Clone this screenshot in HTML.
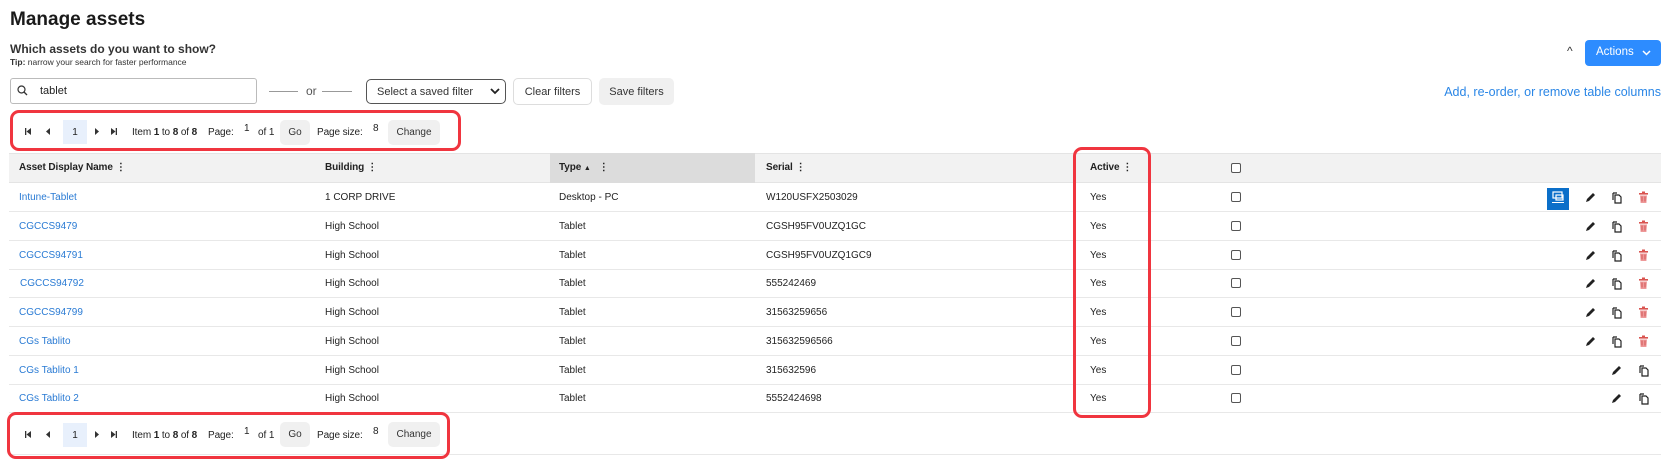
<!DOCTYPE html>
<html><head><meta charset="utf-8"><style>
*{box-sizing:border-box;margin:0;padding:0}
body{width:1670px;height:469px;background:#fff;font-family:"Liberation Sans",Arial,sans-serif;color:#222;position:relative;overflow:hidden}
.a{position:absolute;white-space:nowrap}
.t{font-size:10px;letter-spacing:-0.1px}
.lnk{color:#2a7bd4}
.btn{position:absolute;background:#f0f0f0;border-radius:5px;font-size:10px;color:#333;display:flex;align-items:center;justify-content:center}
.row{position:absolute;left:9px;width:1652px;height:29px;border-bottom:1px solid #e8e8e8}
.row span{position:absolute;top:9px;font-size:10px}
.cb{position:absolute;width:10px;height:10px;border:1px solid #555;border-radius:2px;background:#fff}
.red{position:absolute;border:3px solid #f0353f;border-radius:9px}
.dots{display:inline-block;font-weight:bold;margin-left:3px}
</style></head><body>
<div class="a" style="left:10px;top:9px;font-size:19px;font-weight:bold;color:#1a1a1a">Manage assets</div>
<div class="a" style="left:10px;top:42px;font-size:12px;font-weight:bold;color:#333">Which assets do you want to show?</div>
<div class="a" style="left:10px;top:57px;font-size:8.5px;color:#333"><b>Tip:</b> narrow your search for faster performance</div>

<div class="a" style="left:10px;top:78px;width:247px;height:26px;border:1px solid #bbb;border-radius:3px"></div>
<svg class="a" style="left:17px;top:85px" width="11" height="11" viewBox="0 0 11 11"><circle cx="4.5" cy="4.5" r="3.5" fill="none" stroke="#333" stroke-width="1.2"/><line x1="7" y1="7" x2="10" y2="10" stroke="#333" stroke-width="1.3"/></svg>
<div class="a" style="left:40px;top:85px;font-size:11px">tablet</div>
<div class="a" style="left:269px;top:91px;width:29px;border-top:1px solid #999"></div>
<div class="a" style="left:306px;top:84px;font-size:12px;color:#555">or</div>
<div class="a" style="left:322px;top:91px;width:30px;border-top:1px solid #999"></div>
<div class="a" style="left:366px;top:79px;width:140px;height:25px;border:1px solid #555;border-radius:5px;font-size:11px;color:#333;padding:6px 0 0 10px">Select a saved filter</div>
<svg class="a" style="left:490px;top:88px" width="10" height="7" viewBox="0 0 10 7"><path d="M1 1l4 4 4-4" fill="none" stroke="#222" stroke-width="1.8"/></svg>
<div class="btn" style="left:513px;top:78px;width:79px;height:27px;background:#fff;border:1px solid #ddd;font-size:11px">Clear filters</div>
<div class="btn" style="left:599px;top:78px;width:75px;height:27px;font-size:11px">Save filters</div>

<div class="a" style="left:1567px;top:44px;font-size:12px;color:#333">^</div>
<div class="a" style="left:1585px;top:40px;width:76px;height:26px;background:#2d8cff;border-radius:4px;color:#fff;font-size:11.5px;padding:6px 0 0 11px">Actions</div>
<svg class="a" style="left:1642px;top:50px" width="9" height="6" viewBox="0 0 9 6"><path d="M1 1l3.5 3.5L8 1" fill="none" stroke="#fff" stroke-width="1.5"/></svg>
<div class="a" style="right:9px;top:85px;font-size:12.5px;color:#2a86e6">Add, re-order, or remove table columns</div>

<svg width="0" height="0" style="position:absolute"><defs>
<g id="first"><rect x="0" y="0" width="1.3" height="7" fill="#333"/><path d="M6 0v7L1.5 3.5z" fill="#333"/></g>
<g id="prev"><path d="M5 0v7L1 3.5z" fill="#333"/></g>
<g id="next"><path d="M1 0v7L5 3.5z" fill="#333"/></g>
<g id="last"><path d="M0 0v7L4.5 3.5z" fill="#333"/><rect x="4.7" y="0" width="1.3" height="7" fill="#333"/></g>
<g id="pen"><path d="M2 11l1-3 6-6 2 2-6 6z" fill="#222"/></g>
<g id="cp"><path d="M3 2h4M3 2v7" stroke="#222" fill="none" stroke-width="1.2"/><path d="M5 4h4l2 2v6H5z" fill="none" stroke="#222" stroke-width="1.2"/></g>
<g id="tr"><rect x="2" y="2" width="9" height="1.6" fill="#d9534f"/><rect x="5" y="0.5" width="3" height="1.5" fill="#d9534f"/><path d="M3 4.5h7l-.6 7.5H3.6z" fill="#e99"/><path d="M5 5.5v5M8 5.5v5" stroke="#c44" stroke-width=".8"/></g>
</defs></svg>

<!-- top pager -->
<div class="red" style="left:10px;top:110px;width:451px;height:41px"></div>
<svg class="a" style="left:25px;top:128px" width="6" height="7"><use href="#first"/></svg>
<svg class="a" style="left:45px;top:128px" width="6" height="7"><use href="#prev"/></svg>
<div class="a" style="left:63px;top:120px;width:24px;height:24px;background:#e8f0fc;font-size:10px;text-align:center;padding-top:7px">1</div>
<svg class="a" style="left:94px;top:128px" width="6" height="7"><use href="#next"/></svg>
<svg class="a" style="left:111px;top:128px" width="6" height="7"><use href="#last"/></svg>
<div class="a t" style="left:132px;top:127px">Item <b>1</b> to <b>8</b> of <b>8</b></div>
<div class="a t" style="left:208px;top:127px">Page:</div>
<div class="a t" style="left:244px;top:123px">1</div>
<div class="a t" style="left:258px;top:127px">of 1</div>
<div class="btn" style="left:280px;top:120px;width:30px;height:25px">Go</div>
<div class="a t" style="left:317px;top:127px">Page size:</div>
<div class="a t" style="left:373px;top:123px">8</div>
<div class="btn" style="left:388px;top:120px;width:52px;height:25px">Change</div>

<!-- header -->
<div class="a" style="left:9px;top:153px;width:1652px;height:30px;background:#f2f2f2;border-top:1px solid #e4e4e4;border-bottom:1px solid #e4e4e4"></div>
<div class="a" style="left:550px;top:153px;width:205px;height:30px;background:#dcdcdc"></div>
<div class="a t" style="left:19px;top:162px;font-weight:bold">Asset Display Name<span class="dots">⋮</span></div>
<div class="a t" style="left:325px;top:162px;font-weight:bold">Building<span class="dots">⋮</span></div>
<div class="a t" style="left:559px;top:162px;font-weight:bold">Type <span style="font-size:7px">▲</span><span class="dots" style="margin-left:8px">⋮</span></div>
<div class="a t" style="left:766px;top:162px;font-weight:bold">Serial<span class="dots">⋮</span></div>
<div class="a t" style="left:1090px;top:162px;font-weight:bold">Active<span class="dots">⋮</span></div>
<div class="cb" style="left:1231px;top:163px"></div>

<!-- rows -->
<div class="row" style="top:183px"><span class="lnk" style="left:10px">Intune-Tablet</span><span style="left:316px">1 CORP DRIVE</span><span style="left:550px">Desktop - PC</span><span style="left:757px">W120USFX2503029</span><span style="left:1081px">Yes</span></div>
<div class="row" style="top:212px"><span class="lnk" style="left:10px">CGCCS9479</span><span style="left:316px">High School</span><span style="left:550px">Tablet</span><span style="left:757px">CGSH95FV0UZQ1GC</span><span style="left:1081px">Yes</span></div>
<div class="row" style="top:241px"><span class="lnk" style="left:10px">CGCCS94791</span><span style="left:316px">High School</span><span style="left:550px">Tablet</span><span style="left:757px">CGSH95FV0UZQ1GC9</span><span style="left:1081px">Yes</span></div>
<div class="row" style="top:269px"><span class="lnk" style="left:11px">CGCCS94792</span><span style="left:316px">High School</span><span style="left:550px">Tablet</span><span style="left:757px">555242469</span><span style="left:1081px">Yes</span></div>
<div class="row" style="top:298px"><span class="lnk" style="left:10px">CGCCS94799</span><span style="left:316px">High School</span><span style="left:550px">Tablet</span><span style="left:757px">31563259656</span><span style="left:1081px">Yes</span></div>
<div class="row" style="top:327px"><span class="lnk" style="left:10px">CGs Tablito</span><span style="left:316px">High School</span><span style="left:550px">Tablet</span><span style="left:757px">315632596566</span><span style="left:1081px">Yes</span></div>
<div class="row" style="top:356px"><span class="lnk" style="left:10px">CGs Tablito 1</span><span style="left:316px">High School</span><span style="left:550px">Tablet</span><span style="left:757px">315632596</span><span style="left:1081px">Yes</span></div>
<div class="row" style="top:384px"><span class="lnk" style="left:10px">CGs Tablito 2</span><span style="left:316px">High School</span><span style="left:550px">Tablet</span><span style="left:757px">5552424698</span><span style="left:1081px">Yes</span></div>

<div class="cb" style="left:1231px;top:192px"></div>
<div class="cb" style="left:1231px;top:221px"></div>
<div class="cb" style="left:1231px;top:250px"></div>
<div class="cb" style="left:1231px;top:278px"></div>
<div class="cb" style="left:1231px;top:307px"></div>
<div class="cb" style="left:1231px;top:336px"></div>
<div class="cb" style="left:1231px;top:365px"></div>
<div class="cb" style="left:1231px;top:393px"></div>

<div class="a" style="left:1547px;top:188px;width:22px;height:22px;background:#0b6fc9"></div>
<svg class="a" style="left:1551px;top:191px" width="14" height="13" viewBox="0 0 14 13"><rect x="2" y="1" width="9" height="6" fill="none" stroke="#fff" stroke-width="1.2"/><rect x="5" y="4" width="7" height="5" fill="none" stroke="#fff" stroke-width="1.2"/><rect x="1" y="11" width="12" height="1" fill="#fff"/></svg>

<svg class="a" style="left:1584px;top:191px" width="13" height="13"><use href="#pen"/></svg><svg class="a" style="left:1610px;top:191px" width="13" height="13"><use href="#cp"/></svg><svg class="a" style="left:1637px;top:191px" width="13" height="13"><use href="#tr"/></svg>
<svg class="a" style="left:1584px;top:220px" width="13" height="13"><use href="#pen"/></svg><svg class="a" style="left:1610px;top:220px" width="13" height="13"><use href="#cp"/></svg><svg class="a" style="left:1637px;top:220px" width="13" height="13"><use href="#tr"/></svg>
<svg class="a" style="left:1584px;top:249px" width="13" height="13"><use href="#pen"/></svg><svg class="a" style="left:1610px;top:249px" width="13" height="13"><use href="#cp"/></svg><svg class="a" style="left:1637px;top:249px" width="13" height="13"><use href="#tr"/></svg>
<svg class="a" style="left:1584px;top:277px" width="13" height="13"><use href="#pen"/></svg><svg class="a" style="left:1610px;top:277px" width="13" height="13"><use href="#cp"/></svg><svg class="a" style="left:1637px;top:277px" width="13" height="13"><use href="#tr"/></svg>
<svg class="a" style="left:1584px;top:306px" width="13" height="13"><use href="#pen"/></svg><svg class="a" style="left:1610px;top:306px" width="13" height="13"><use href="#cp"/></svg><svg class="a" style="left:1637px;top:306px" width="13" height="13"><use href="#tr"/></svg>
<svg class="a" style="left:1584px;top:335px" width="13" height="13"><use href="#pen"/></svg><svg class="a" style="left:1610px;top:335px" width="13" height="13"><use href="#cp"/></svg><svg class="a" style="left:1637px;top:335px" width="13" height="13"><use href="#tr"/></svg>
<svg class="a" style="left:1610px;top:364px" width="13" height="13"><use href="#pen"/></svg><svg class="a" style="left:1637px;top:364px" width="13" height="13"><use href="#cp"/></svg>
<svg class="a" style="left:1610px;top:392px" width="13" height="13"><use href="#pen"/></svg><svg class="a" style="left:1637px;top:392px" width="13" height="13"><use href="#cp"/></svg>

<div class="red" style="left:1073px;top:147px;width:78px;height:271px"></div>

<!-- bottom pager -->
<div class="a" style="left:9px;top:454px;width:1652px;border-top:1px solid #e8e8e8"></div>
<div class="red" style="left:7px;top:412px;width:443px;height:47px"></div>
<svg class="a" style="left:25px;top:431px" width="6" height="7"><use href="#first"/></svg>
<svg class="a" style="left:45px;top:431px" width="6" height="7"><use href="#prev"/></svg>
<div class="a" style="left:63px;top:423px;width:24px;height:24px;background:#e8f0fc;font-size:10px;text-align:center;padding-top:7px">1</div>
<svg class="a" style="left:94px;top:431px" width="6" height="7"><use href="#next"/></svg>
<svg class="a" style="left:111px;top:431px" width="6" height="7"><use href="#last"/></svg>
<div class="a t" style="left:132px;top:430px">Item <b>1</b> to <b>8</b> of <b>8</b></div>
<div class="a t" style="left:208px;top:430px">Page:</div>
<div class="a t" style="left:244px;top:426px">1</div>
<div class="a t" style="left:258px;top:430px">of 1</div>
<div class="btn" style="left:280px;top:422px;width:30px;height:25px">Go</div>
<div class="a t" style="left:317px;top:430px">Page size:</div>
<div class="a t" style="left:373px;top:426px">8</div>
<div class="btn" style="left:388px;top:422px;width:52px;height:25px">Change</div>
</body></html>
